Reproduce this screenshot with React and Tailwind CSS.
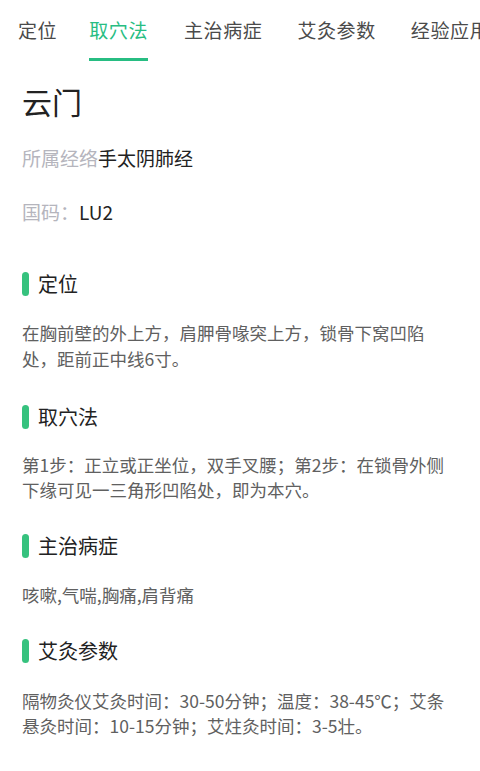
export default function App() {
  const tabs = [
    { t: "定位", m: "ml-[18px]" },
    { t: "取穴法", m: "ml-[32px]" },
    { t: "主治病症", m: "ml-[36px]" },
    { t: "艾灸参数", m: "ml-[35px]" },
    { t: "经验应用", m: "ml-[35px]" },
  ];
  const font = { fontFamily: '"Noto Sans CJK SC", "Noto Sans", sans-serif' };
  const Heading = ({ children, className = "" }) => (
    <div className={"flex items-center h-[28px] " + className}>
      <div className="w-[7px] h-[24px] rounded-full bg-[#36c27e] mr-[9px]" />
      <div className="text-[20px] leading-[28px] text-[#222]">{children}</div>
    </div>
  );
  return (
    <div className="w-[480px] h-[771px] bg-white overflow-hidden" style={font}>
      <div className="flex whitespace-nowrap h-[62px]">
        {tabs.map((tab, i) => (
          <div key={tab.t} className={"flex flex-col items-stretch pt-[18px] shrink-0 " + tab.m}>
            <div
              className={
                "text-[19px] leading-[24px] tracking-[0.6px] " +
                (i === 1 ? "text-[#27bd82]" : "text-[#4a4a4a]")
              }
            >
              {tab.t}
            </div>
            <div className={"mt-[16px] h-[3px] " + (i === 1 ? "bg-[#27bd82]" : "")} />
          </div>
        ))}
      </div>
      <div className="pl-[22px] pr-[10px]">
        <div className="mt-[21px] text-[30px] leading-[36px] text-[#222]">云门</div>
        <div className="mt-[26px] text-[19px] leading-[26px]">
          <span className="text-[#b5b5bd]">所属经络</span>
          <span className="text-[#222]">手太阴肺经</span>
        </div>
        <div className="mt-[28px] text-[19px] leading-[26px]">
          <span className="text-[#b5b5bd]">国码：</span>
          <span className="text-[#222]">LU2</span>
        </div>

        <Heading className="mt-[45px]">定位</Heading>
        <div className="mt-[22px] text-[17.5px] leading-[26px] text-[#606060] whitespace-nowrap">
          在胸前壁的外上方，肩胛骨喙突上方，锁骨下窝凹陷
          <br />
          处，距前正中线6寸。
        </div>

        <Heading className="mt-[31px]">取穴法</Heading>
        <div className="mt-[21px] text-[17.5px] leading-[25px] text-[#606060] whitespace-nowrap">
          第1步：正立或正坐位，双手叉腰；第2步：在锁骨外侧
          <br />
          下缘可见一三角形凹陷处，即为本穴。
        </div>

        <Heading className="mt-[30px]">主治病症</Heading>
        <div className="mt-[22px] text-[17.5px] leading-[26px] text-[#606060]">
          咳嗽,气喘,胸痛,肩背痛
        </div>

        <Heading className="mt-[29px]">艾灸参数</Heading>
        <div className="mt-[23px] text-[17.5px] leading-[25px] text-[#606060] whitespace-nowrap">
          隔物灸仪艾灸时间：30-50分钟；温度：38-45℃；艾条
          <br />
          悬灸时间：10-15分钟；艾炷灸时间：3-5壮。
        </div>
      </div>
    </div>
  );
}
